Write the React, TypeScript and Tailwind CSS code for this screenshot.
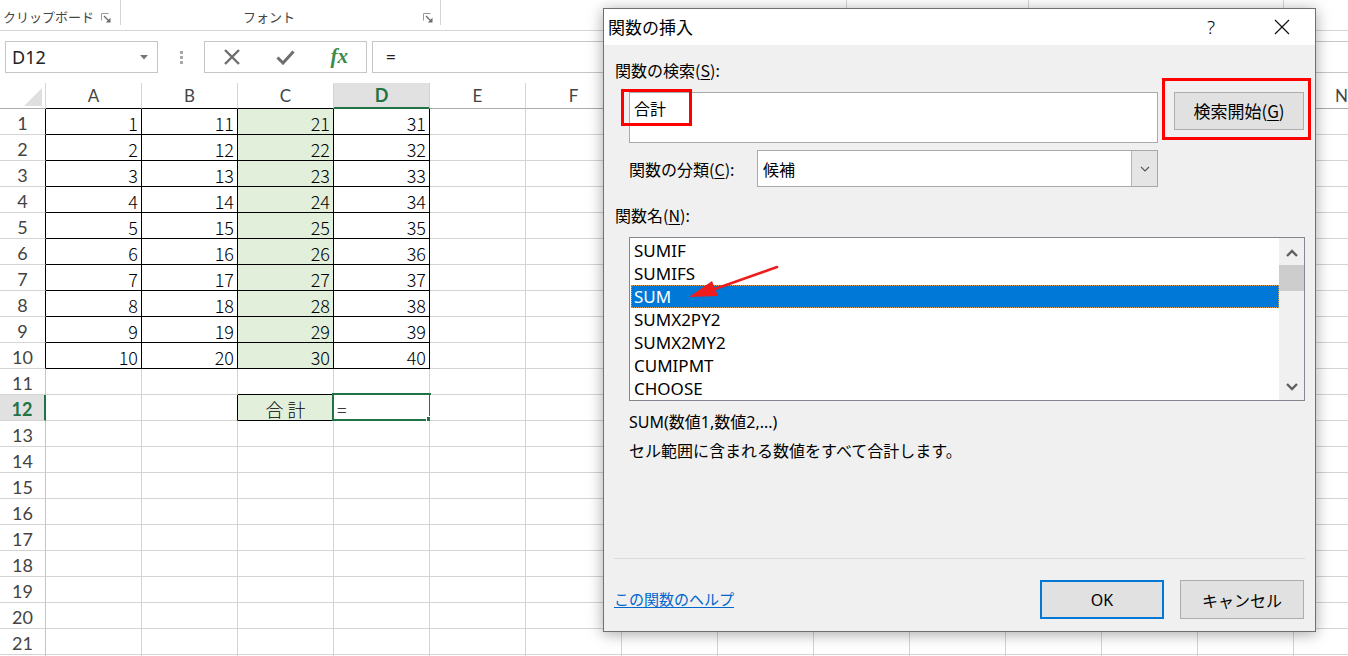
import React from 'react';

const COLS = ['A', 'B', 'C', 'D', 'E', 'F', 'G', 'H', 'I', 'J', 'K', 'L', 'M', 'N'];
const ROWS = Array.from({ length: 22 }, (_, i) => i + 1);
const ITEMS = ['SUMIF', 'SUMIFS', 'SUM', 'SUMX2PY2', 'SUMX2MY2', 'CUMIPMT', 'CHOOSE'];

function Launcher() {
  return (
    <svg width="10" height="10" viewBox="0 0 10 10" className="shrink-0">
      <path d="M0.5 7.5V0.5H7.5" fill="none" stroke="#9a9a9a" strokeWidth="1" />
      <path d="M3 3L7.2 7.2" stroke="#6a6a6a" strokeWidth="1.3" />
      <path d="M9.5 9.5H4.8L9.5 4.8Z" fill="#6a6a6a" />
    </svg>
  );
}

function Sep() {
  return <div className="w-px h-[25px] bg-[#d5d5d5] shrink-0" />;
}

function Ribbon() {
  return (
    <div className="h-[31px] border-b border-b-[#d5d5d5] flex items-start text-[13px] text-[#444] font-['Noto_Sans_CJK_JP',sans-serif]">
      <div className="w-[120px] shrink-0 flex items-center pt-[7px] leading-[20px]">
        <span className="pl-[3px]">クリップボード</span>
        <span className="ml-auto mr-[9px] mt-[2px]"><Launcher /></span>
      </div>
      <Sep />
      <div className="w-[319px] shrink-0 flex items-center pt-[7px] leading-[20px]">
        <span className="ml-[122px]">フォント</span>
        <span className="ml-auto mr-[7px] mt-[2px]"><Launcher /></span>
      </div>
      <Sep />
      <div className="w-[405px] shrink-0" />
      <Sep />
      <div className="w-[181px] shrink-0" />
      <Sep />
      <div className="w-[254px] shrink-0" />
      <Sep />
    </div>
  );
}

function FormulaBar() {
  return (
    <div className="mt-[10px] h-[32px] flex">
      <div className="ml-[5px] w-[153px] h-full border border-[#c6c6c6] flex items-center shrink-0">
        <span className="pl-[6px] text-[18px] text-[#222] font-['Noto_Sans',sans-serif] leading-none">D12</span>
        <svg width="8" height="5" viewBox="0 0 8 5" className="ml-auto mr-[9px]">
          <path d="M0 0H8L4 4.5Z" fill="#777" />
        </svg>
      </div>
      <div className="w-[46px] shrink-0 flex flex-col items-center justify-center gap-[2px]">
        <div className="w-[3px] h-[3px] bg-[#a8a8a8]" />
        <div className="w-[3px] h-[3px] bg-[#a8a8a8]" />
        <div className="w-[3px] h-[3px] bg-[#a8a8a8]" />
      </div>
      <div className="w-[163px] h-full border border-[#c6c6c6] flex shrink-0">
        <div className="w-[54px] flex items-center justify-center">
          <svg width="18" height="16" viewBox="0 0 18 16">
            <path d="M2 1L16 15M16 1L2 15" stroke="#6e6e6e" strokeWidth="2.4" />
          </svg>
        </div>
        <div className="w-[54px] flex items-center justify-center">
          <svg width="19" height="15" viewBox="0 0 19 15">
            <path d="M1.5 7.5L7 13L17.5 1.5" fill="none" stroke="#6e6e6e" strokeWidth="3" />
          </svg>
        </div>
        <div className="w-[54px] flex items-center justify-center">
          <span className="font-['Liberation_Serif',serif] italic font-bold text-[21px] text-[#3a8a4a] leading-none -mt-[2px]">fx</span>
        </div>
      </div>
      <div className="ml-[5px] flex-1 h-full border-t border-b border-l border-[#c6c6c6] flex items-center">
        <span className="pl-[13px] text-[17px] text-[#222] font-['Noto_Sans',sans-serif]">=</span>
      </div>
    </div>
  );
}

function ColHeader({ c, i }: { c: string; i: number }) {
  const sel = i === 3;
  const bottom =
    i <= 2
      ? 'border-b border-b-black'
      : sel
      ? 'border-b-2 border-b-[#217346]'
      : 'border-b border-b-[#ababab]';
  return (
    <div
      className={`w-[96px] shrink-0 h-[26px] border-r border-r-[#d4d4d4] flex items-center justify-center leading-[22px] text-[17px] font-['Lato',sans-serif] ${bottom} ${
        sel ? 'bg-[#e1e1e1] text-[#217346] font-bold text-[18px]' : 'bg-white text-[#444]'
      }`}
    >
      {c}
    </div>
  );
}

function RowHeader({ r }: { r: number }) {
  let cls = 'border-r border-r-[#c4c4c4] bg-white text-[#444]';
  if (r <= 10) cls = 'border-r border-r-black bg-white text-[#444]';
  if (r === 12) cls = 'border-r-2 border-r-[#217346] bg-[#e1e1e1] text-[#217346] font-bold';
  return (
    <div
      className={`w-[46px] shrink-0 h-[26px] border-b border-b-[#d4d4d4] flex items-end justify-center leading-[22px] text-[18px] font-['Lato',sans-serif] ${cls}`}
    >
      {r <= 21 ? r : ''}
    </div>
  );
}

function Cell({ r, ci }: { r: number; ci: number }) {
  const inTable = r >= 1 && r <= 10 && ci <= 3;
  const rightBlack = inTable || (r === 12 && (ci === 1 || ci === 2));
  const bottomBlack = inTable || ((r === 11 || r === 12) && ci === 2);
  const green = ci === 2 && ((r >= 1 && r <= 10) || r === 12);
  const right = rightBlack ? 'border-r-black' : 'border-r-[#d4d4d4]';
  const bottom = bottomBlack ? 'border-b-black' : 'border-b-[#d4d4d4]';
  const bg = green ? 'bg-[#e2efda]' : 'bg-white';
  let content: React.ReactNode = null;
  let align = 'justify-end pr-[3px]';
  if (inTable) content = String(ci * 10 + r);
  if (r === 12 && ci === 2) {
    content = '合 計';
    align = 'justify-center';
  }
  if (r === 12 && ci === 3) {
    content = '=';
    align = 'justify-start pl-[3px]';
  }
  return (
    <div
      className={`relative w-[96px] shrink-0 h-[26px] border-r border-b flex items-end leading-[22px] text-[18px] font-light text-black ${right} ${bottom} ${bg} ${align}`}
    >
      {content}
      {r === 12 && ci === 3 && (
        <div className="absolute -left-[2px] -top-[2px] -right-[2px] -bottom-[1px] border-2 border-[#217346]">
          <div className="absolute -right-[4px] -bottom-[4px] w-[7px] h-[7px] bg-[#217346] border border-white" />
        </div>
      )}
    </div>
  );
}

function Sheet() {
  return (
    <div className="mt-[10px] font-['Noto_Sans_CJK_JP',sans-serif]">
      <div className="flex h-[26px]">
        <div className="w-[46px] shrink-0 h-[26px] border-r border-r-[#d4d4d4] border-b border-b-[#ababab] flex items-end justify-end pr-[3px] pb-[2px]">
          <svg width="18" height="18" viewBox="0 0 18 18">
            <path d="M18 0V18H0Z" fill="#dfdfdf" />
          </svg>
        </div>
        {COLS.map((c, i) => (
          <ColHeader key={c} c={c} i={i} />
        ))}
      </div>
      {ROWS.map((r) => (
        <div key={r} className="flex h-[26px]">
          <RowHeader r={r} />
          {COLS.map((c, ci) => (
            <Cell key={c} r={r} ci={ci} />
          ))}
        </div>
      ))}
    </div>
  );
}

function ChevronUp() {
  return (
    <svg width="12" height="8" viewBox="0 0 12 8">
      <path d="M1 7L6 2L11 7" fill="none" stroke="#606060" strokeWidth="2.4" />
    </svg>
  );
}
function ChevronDown() {
  return (
    <svg width="12" height="8" viewBox="0 0 12 8">
      <path d="M1 1L6 6L11 1" fill="none" stroke="#606060" strokeWidth="2.4" />
    </svg>
  );
}

function Dialog() {
  return (
    <div className="absolute left-[603px] top-[8px] w-[713px] h-[624px] border border-[#707070] bg-[#f0f0f0] shadow-[0_2px_14px_rgba(0,0,0,0.35)] flex flex-col text-[16px] text-black font-['Noto_Sans','Noto_Sans_CJK_JP',sans-serif]">
      <div className="h-[36px] bg-white flex items-center shrink-0">
        <span className="pl-[4px] font-['Noto_Sans_CJK_JP',sans-serif] text-[17px]">関数の挿入</span>
        <div className="ml-auto flex items-center pr-[11px]">
          <div className="w-[30px] mr-[34px] text-center text-[19px] font-light leading-none">?</div>
          <div className="w-[44px] flex items-center justify-center">
            <svg width="16" height="16" viewBox="0 0 16 16">
              <path d="M1 1L15 15M15 1L1 15" stroke="#111" strokeWidth="1.2" />
            </svg>
          </div>
        </div>
      </div>
      <div className="flex flex-col pt-[14px] pl-[11px] pr-[11px] font-['Noto_Sans_CJK_JP',sans-serif]">
        <div className="h-[22px] leading-[22px]">
          関数の検索(<span className="underline underline-offset-2">S</span>):
        </div>
        <div className="mt-[11px] pl-[14px] flex items-start">
          <div className="relative w-[529px] h-[51px] bg-white border border-[#a9a9a9] shrink-0">
            <div className="pl-[4px] pt-[4px] leading-[22px]">合計</div>
            <div className="absolute -left-[9px] -top-[4px] w-[71px] h-[37px] border-[3px] border-[#ff0000]" />
          </div>
          <div className="relative ml-[16px] w-[130px] h-[38px] shrink-0">
            <div className="w-full h-full bg-[#e1e1e1] border border-[#adadad] flex items-center justify-center text-[17px]">
              <span>検索開始(<span className="underline underline-offset-2">G</span>)</span>
            </div>
            <div className="absolute -left-[12px] -top-[14px] w-[149px] h-[62px] border-[3px] border-[#ff0000]" />
          </div>
        </div>
        <div className="mt-[7px] pl-[14px] flex items-center">
          <div className="w-[128px] shrink-0 leading-[22px]">
            関数の分類(<span className="underline underline-offset-2">C</span>):
          </div>
          <div className="w-[401px] h-[37px] bg-white border border-[#a9a9a9] flex items-stretch shrink-0">
            <div className="flex-1 flex items-center pl-[5px]">候補</div>
            <div className="w-[26px] bg-[#e5e5e5] border-l border-l-[#b4b4b4] flex items-center justify-center">
              <svg width="10" height="6" viewBox="0 0 10 6">
                <path d="M1 1L5 5L9 1" fill="none" stroke="#555" strokeWidth="1.1" />
              </svg>
            </div>
          </div>
        </div>
        <div className="mt-[17px] h-[22px] leading-[22px]">
          関数名(<span className="underline underline-offset-2">N</span>):
        </div>
        <div className="mt-[11px] ml-[14px] w-[676px] h-[164px] bg-white border border-[#828790] flex">
          <div className="flex-1 pt-[1px] pl-[1px] font-['Noto_Sans',sans-serif] text-[17px]">
            {ITEMS.map((it) =>
              it === 'SUM' ? (
                <div
                  key={it}
                  className="h-[23px] flex items-center pl-[2px] bg-[#0078d7] text-white border border-dotted border-[#e0a050] leading-none"
                >
                  {it}
                </div>
              ) : (
                <div key={it} className="h-[23px] flex items-center pl-[3px] leading-none">
                  {it}
                </div>
              )
            )}
          </div>
          <div className="w-[25px] bg-[#f0f0f0] flex flex-col shrink-0">
            <div className="h-[27px] flex items-center justify-center pt-[2px]">
              <ChevronUp />
            </div>
            <div className="h-[26px] bg-[#cdcdcd]" />
            <div className="flex-1" />
            <div className="h-[26px] flex items-center justify-center">
              <ChevronDown />
            </div>
          </div>
        </div>
        <div className="mt-[10px] pl-[14px] h-[22px] leading-[22px] font-['Noto_Sans','Noto_Sans_CJK_JP',sans-serif]">
          SUM(数値1,数値2,...)
        </div>
        <div className="mt-[6px] pl-[14px] h-[22px] leading-[22px]">
          セル範囲に含まれる数値をすべて合計します。
        </div>
        <div className="mt-[97px] -ml-[1px] w-[691px] h-px bg-[#dadada]" />
        <div className="mt-[21px] flex items-center">
          <span className="-ml-[1px] text-[15px] text-[#0066cc] underline underline-offset-2">この関数のヘルプ</span>
          <div className="ml-auto w-[124px] h-[39px] bg-[#e1e1e1] border-2 border-[#0078d7] flex items-center justify-center font-['Noto_Sans',sans-serif]">
            OK
          </div>
          <div className="ml-[16px] w-[124px] h-[39px] bg-[#e1e1e1] border border-[#adadad] flex items-center justify-center">
            キャンセル
          </div>
        </div>
      </div>
    </div>
  );
}

function Arrow() {
  return (
    <svg className="absolute left-0 top-0 pointer-events-none" width="1348" height="656" viewBox="0 0 1348 656">
      <path d="M777 267L712 290" stroke="#ee1c1c" strokeWidth="2.6" strokeLinecap="round" />
      <path d="M689 297L712 281L718 296Z" fill="#ee1c1c" />
    </svg>
  );
}

export default function App() {
  return (
    <div className="relative w-[1348px] h-[656px] overflow-hidden bg-white">
      <Ribbon />
      <FormulaBar />
      <Sheet />
      <Dialog />
      <Arrow />
    </div>
  );
}
